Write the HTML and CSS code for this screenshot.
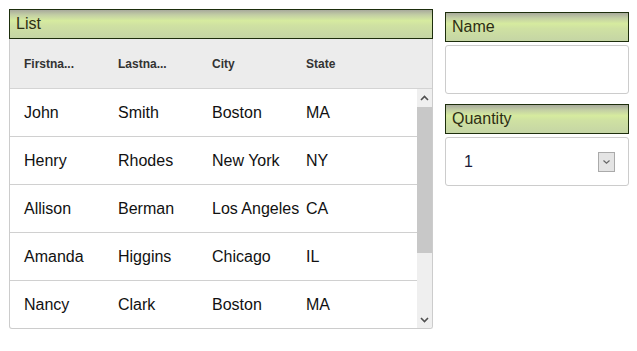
FILE: index.html
```html
<!DOCTYPE html>
<html lang="en">
<head>
  <meta charset="UTF-8" />
  <title>List</title>
  <link rel="stylesheet" href="styles.css">
</head>
<body>
  <div class="page">
    <div class="list">
      <div class="panel-title">List</div>
      <div class="grid">
        <div class="grid-head">
          <div class="col"><span title="Firstname">Firstna...</span></div>
          <div class="col"><span title="Lastname">Lastna...</span></div>
          <div class="col"><span>City</span></div>
          <div class="col"><span>State</span></div>
        </div>
        <div class="grid-body">
          <div class="rows">
            <div class="row"><div class="cell">John</div><div class="cell">Smith</div><div class="cell">Boston</div><div class="cell">MA</div></div>
            <div class="row"><div class="cell">Henry</div><div class="cell">Rhodes</div><div class="cell">New York</div><div class="cell">NY</div></div>
            <div class="row"><div class="cell">Allison</div><div class="cell">Berman</div><div class="cell">Los Angeles</div><div class="cell">CA</div></div>
            <div class="row"><div class="cell">Amanda</div><div class="cell">Higgins</div><div class="cell">Chicago</div><div class="cell">IL</div></div>
            <div class="row"><div class="cell">Nancy</div><div class="cell">Clark</div><div class="cell">Boston</div><div class="cell">MA</div></div>
          </div>
          <div class="scrollbar">
            <div class="arrow">
              <svg width="9" height="6" viewBox="0 0 9 6"><path d="M1 5 L4.5 1.5 L8 5" fill="none" stroke="#505050" stroke-width="1.6"/></svg>
            </div>
            <div class="track"><div class="thumb"></div></div>
            <div class="arrow">
              <svg width="9" height="6" viewBox="0 0 9 6"><path d="M1 1 L4.5 4.5 L8 1" fill="none" stroke="#505050" stroke-width="1.6"/></svg>
            </div>
          </div>
        </div>
      </div>
    </div>

    <div class="side">
      <div class="panel-title">Name</div>
      <div class="field"></div>

      <div class="panel-title gap">Quantity</div>
      <div class="field select">
        <span class="value">1</span>
        <div class="drop">
          <svg width="9" height="6" viewBox="0 0 9 6"><path d="M1.5 1.5 L4.5 4.2 L7.5 1.5" fill="none" stroke="#666" stroke-width="1.2"/></svg>
        </div>
      </div>
    </div>
  </div>
</body>
</html>
```

FILE: styles.css
```css
body {
  margin: 0;
  background: #fff;
  font-family: "Liberation Sans", Arial, sans-serif;
  color: #222;
}

.page {
  display: flex;
  align-items: flex-start;
  gap: 12px;
  padding: 9px 0 0 9px;
}

.list {
  width: 424px;
}

.panel-title {
  box-sizing: border-box;
  height: 30px;
  padding: 0 6px;
  line-height: 28px;
  font-size: 16px;
  color: #2e2e14;
  border: 1px solid #1d2e0c;
  background: linear-gradient(#a8aa9c 0%, #c3cfa4 18%, #d6eb9f 38%, #cfe1a2 55%, #c5d5a5 100%);
}

.grid {
  box-sizing: border-box;
  height: 290px;
  border: 1px solid #cccccc;
  border-top: none;
  border-radius: 0 0 3px 3px;
  display: flex;
  flex-direction: column;
  overflow: hidden;
}

.grid-head {
  display: flex;
  height: 49px;
  flex-shrink: 0;
  background: #ececec;
  border-bottom: 1px solid #d4d4d4;
  font-size: 12px;
  font-weight: bold;
  color: #333;
}

.col {
  width: 94px;
  box-sizing: border-box;
  padding-left: 14px;
  display: flex;
  align-items: center;
  white-space: nowrap;
}

.grid-body {
  flex: 1;
  display: flex;
  overflow: hidden;
}

.rows {
  flex: 1;
}

.row {
  display: flex;
  height: 47px;
  border-bottom: 1px solid #d0d0d0;
  font-size: 16px;
  color: #111;
}

.row:last-child {
  height: 47px;
  border-bottom: none;
}

.cell {
  width: 94px;
  box-sizing: border-box;
  padding-left: 14px;
  display: flex;
  align-items: center;
  white-space: nowrap;
}

.scrollbar {
  width: 15px;
  background: #efefef;
  display: flex;
  flex-direction: column;
}

.arrow {
  height: 17px;
  display: flex;
  align-items: center;
  justify-content: center;
}

.track {
  flex: 1;
  padding-top: 1px;
}

.thumb {
  height: 146px;
  background: #c8c8c8;
}

.side {
  width: 184px;
  margin-top: 3px;
}

.field {
  box-sizing: border-box;
  height: 49px;
  margin-top: 3px;
  border: 1px solid #cccccc;
  border-radius: 3px;
  background: #fff;
}

.panel-title.gap {
  margin-top: 10px;
}

.select {
  display: flex;
  align-items: center;
  justify-content: space-between;
  padding: 0 13px 0 18px;
}

.value {
  font-size: 16px;
  color: #1a1a3a;
}

.drop {
  box-sizing: border-box;
  width: 17px;
  height: 20px;
  border: 1px solid #aaaaaa;
  background: #e4e4e4;
  display: flex;
  align-items: center;
  justify-content: center;
}
```
